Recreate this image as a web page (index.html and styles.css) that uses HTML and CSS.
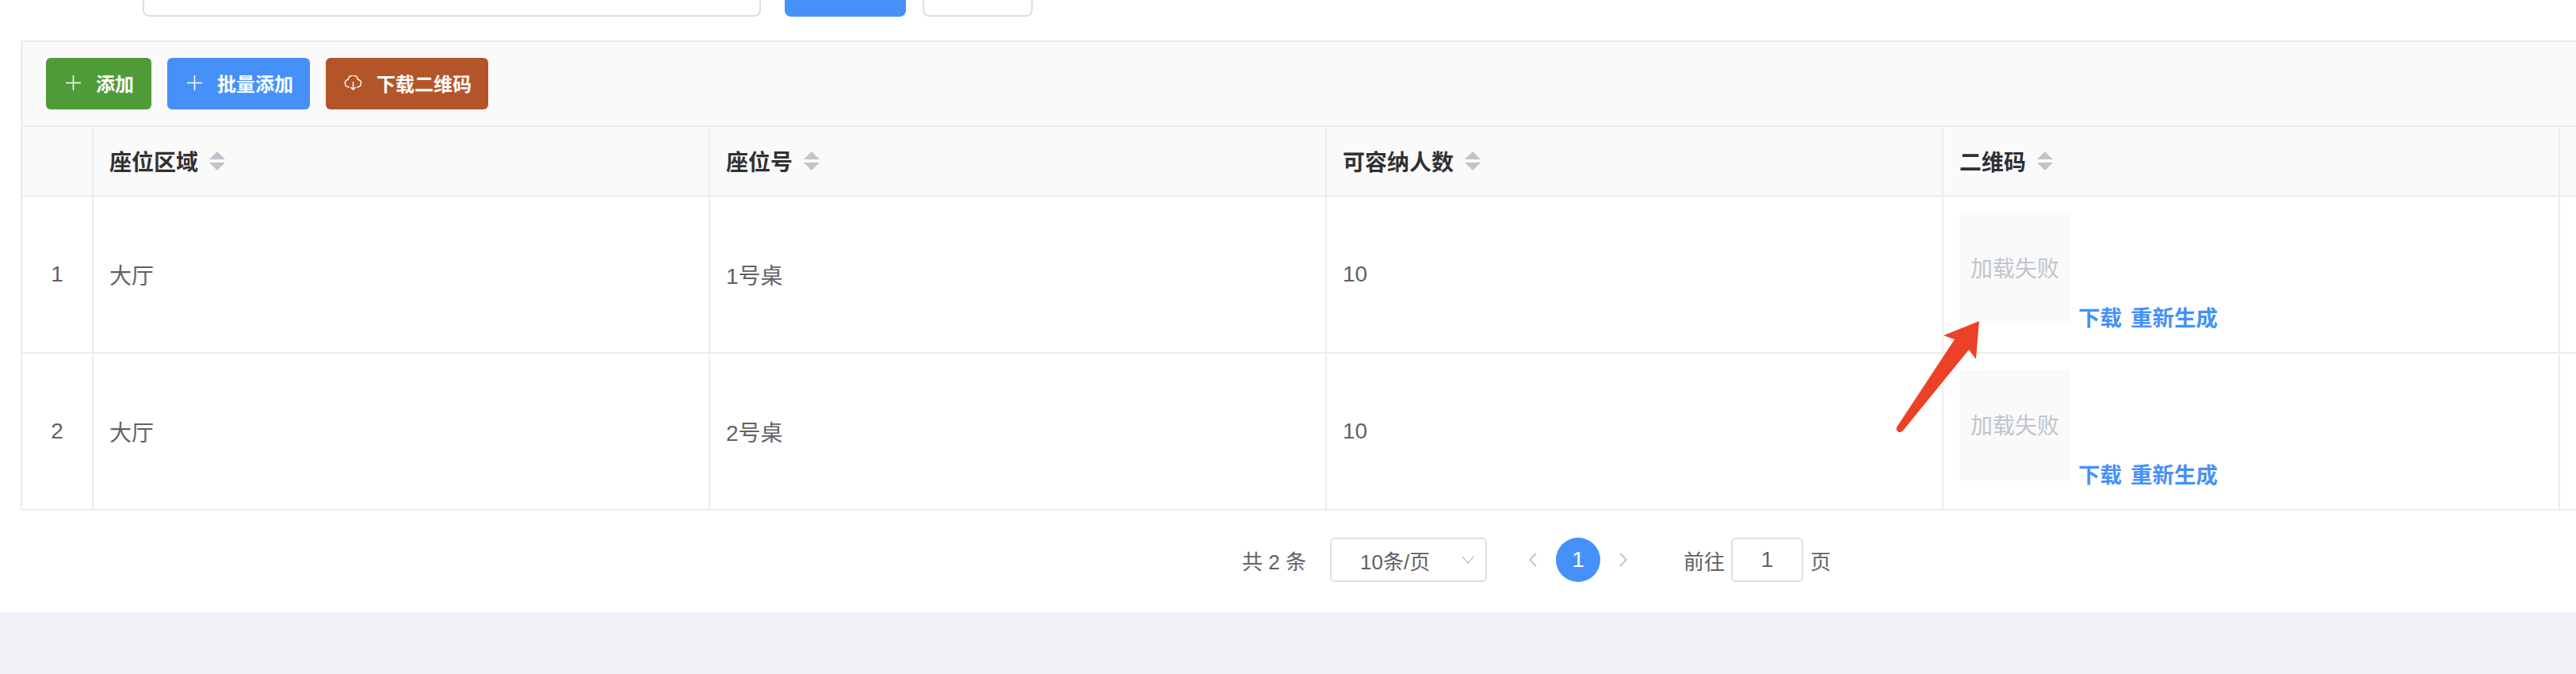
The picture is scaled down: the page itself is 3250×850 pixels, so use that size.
FILE: index.html
```html
<!DOCTYPE html>
<html lang="zh">
<head>
<meta charset="utf-8">
<title>座位管理</title>
<link rel="stylesheet" href="styles.css">
</head>
<body>
<div class="page">
  <main class="panel">
    <div class="search-row">
      <div class="search-input"></div>
      <div class="search-btn primary"></div>
      <div class="search-btn plain"></div>
    </div>
    <section class="table-wrap">
      <div class="toolbar">
        <button class="btn green"><svg class="ico" viewBox="0 0 20 20"><path d="M10 0v20M0 10h20"/></svg><span>添加</span></button>
        <button class="btn blue"><svg class="ico" viewBox="0 0 20 20"><path d="M10 0v20M0 10h20"/></svg><span>批量添加</span></button>
        <button class="btn brown"><svg class="ico cloud" viewBox="0 0 24 20"><path d="M7 15.5H6a5 5 0 0 1-.6-9.9A6.6 6.6 0 0 1 18.4 5.6a5 5 0 0 1-.4 9.9H17M12 8.5V19M8.8 15.8 12 19l3.2-3.2"/></svg><span>下载二维码</span></button>
      </div>
      <table class="grid">
        <colgroup><col class="c-idx"><col class="c-data"><col class="c-data"><col class="c-data"><col class="c-data"><col class="c-rest"></colgroup>
        <thead>
          <tr>
            <th></th>
            <th><span class="th-in">座位区域<i class="sort"></i></span></th>
            <th><span class="th-in">座位号<i class="sort"></i></span></th>
            <th><span class="th-in">可容纳人数<i class="sort"></i></span></th>
            <th><span class="th-in">二维码<i class="sort"></i></span></th>
            <th></th>
          </tr>
        </thead>
        <tbody>
          <tr>
            <td class="idx">1</td><td>大厅</td><td>1号桌</td><td>10</td>
            <td class="qr-td"><div class="qr-cell"><div class="qr">加载失败</div><a class="lnk">下载</a><a class="lnk">重新生成</a></div></td>
            <td></td>
          </tr>
          <tr>
            <td class="idx">2</td><td>大厅</td><td>2号桌</td><td>10</td>
            <td class="qr-td"><div class="qr-cell"><div class="qr">加载失败</div><a class="lnk">下载</a><a class="lnk">重新生成</a></div></td>
            <td></td>
          </tr>
        </tbody>
      </table>
    </section>
    <nav class="pager">
      <span class="total">共 2 条</span>
      <div class="size-select"><span>10条/页</span><svg class="caret" viewBox="0 0 16 10"><path d="M.7.7 8 9.2 15.3.7"/></svg></div>
      <svg class="arrow-ico first" viewBox="0 0 10 18"><path d="M9 .7 1.3 9 9 17.3"/></svg>
      <span class="cur">1</span>
      <svg class="arrow-ico" viewBox="0 0 10 18"><path d="M1 .7 8.7 9 1 17.3"/></svg>
      <span class="goto">前往</span>
      <div class="jump">1</div>
      <span class="unit">页</span>
    </nav>
    <svg class="annot" viewBox="0 0 130 160"><path d="M117 10 72 28 86 33 13.5 143Q11 147 15 149.5 18 151 21 148L104 46 113 58Z"/></svg>
  </main>
  <footer class="foot"></footer>
</div>
</body>
</html>
```
FILE: styles.css
```css
* { box-sizing: border-box; }
html, body { margin: 0; padding: 0; overflow: hidden; }
body { width: 3250px; height: 850px; font-family: "Liberation Sans", "Noto Sans CJK SC", sans-serif; color: #606266; }
.page { display: flex; flex-direction: column; height: 850px; }
.panel { position: relative; height: 772px; background: #fff; padding-left: 26px; overflow: hidden; }
.search-row { height: 21px; display: flex; align-items: flex-end; margin-bottom: 30px; }
.search-input, .search-btn { height: 60px; border-radius: 8px; flex: none; }
.search-input { width: 780px; margin-left: 154px; border: 2px solid #dcdfe6; }
.search-btn.primary { width: 153px; margin-left: 30px; background: #4691f9; }
.search-btn.plain { width: 139px; margin-left: 21px; border: 2px solid #dcdfe6; }
.table-wrap { width: 3300px; border: 2px solid #ebecee; border-width: 2px 0 0 2px; }
.toolbar { height: 107px; background: #fafafa; display: flex; align-items: center; gap: 20px; padding-left: 30px; border-bottom: 2px solid #ebecee; }
.btn { height: 65px; border: 0; border-radius: 6px; color: #fff; font: bold 24px "Liberation Sans", "Noto Sans CJK SC", sans-serif; display: flex; align-items: center; padding: 0 0 2px 25px; margin: 0; white-space: nowrap; }
.btn.green { background: #4f9b38; width: 133px; }
.btn.blue { background: #4691f9; width: 180px; }
.btn.brown { background: #b45529; width: 205px; padding-left: 23px; }
.ico { width: 19px; height: 19px; fill: none; stroke: #fff; stroke-width: 1.6; margin-right: 19px; flex: none; }
.ico.cloud { width: 23px; height: 19px; stroke-width: 1.5; margin-right: 18px; }
.grid { border-collapse: separate; border-spacing: 0; table-layout: fixed; width: 3300px; font-size: 28px; }
.c-idx { width: 90px; }
.c-data { width: 778px; }
th, td { padding: 0 20px; border-right: 2px solid #ebecee; border-bottom: 2px solid #ebecee; text-align: left; }
thead tr { height: 88px; }
tbody tr { height: 198px; }
th { background: #fafafa; color: #303133; font-weight: bold; }
.th-in { display: inline-flex; align-items: center; }
.sort { display: inline-block; position: relative; width: 20px; height: 24px; margin-left: 14px; }
.sort::before, .sort::after { content: ""; position: absolute; left: 0; border-left: 10px solid transparent; border-right: 10px solid transparent; }
.sort::before { top: 0; border-bottom: 10px solid #c0c4cc; }
.sort::after { bottom: 0; border-top: 10px solid #c0c4cc; }
td.idx { text-align: center; padding: 0; }
td.qr-td { vertical-align: top; padding-top: 20px; }
.qr-cell { display: flex; align-items: flex-end; }
.qr { width: 140px; height: 140px; background: #fafafa; color: #c0c4cc; display: flex; align-items: center; justify-content: center; font-size: 28px; padding-bottom: 2px; margin-right: 10px; white-space: nowrap; }
.lnk { color: #4691f9; font-weight: bold; font-size: 27.5px; margin-right: 11px; line-height: 26px; margin-bottom: -7px; }
.pager { height: 56px; margin-top: 34px; display: flex; align-items: center; font-size: 26px; }
.total { margin-left: 1541px; width: 111px; white-space: nowrap; }
.size-select { width: 198px; height: 56px; border: 2px solid #dcdfe6; border-radius: 6px; display: flex; align-items: center; justify-content: space-between; padding: 0 14px 0 36px; }
.caret { width: 16px; height: 10px; fill: none; stroke: #c0c4cc; stroke-width: 1.4; }
.arrow-ico { width: 10px; height: 18px; fill: none; stroke: #c0c4cc; stroke-width: 2; margin-left: 24px; flex: none; }
.arrow-ico.first { margin-left: 53px; margin-right: 24px; }
.cur { width: 56px; height: 56px; border-radius: 50%; background: #4691f9; color: #fff; font-size: 28px; display: flex; align-items: center; justify-content: center; flex: none; }
.goto { margin-left: 71px; margin-right: 8px; }
.jump { width: 91px; height: 56px; border: 2px solid #dcdfe6; border-radius: 6px; font-size: 28px; display: flex; align-items: center; justify-content: center; }
.unit { margin-left: 9px; }
.annot { position: absolute; left: 2380px; top: 395px; width: 130px; height: 160px; fill: #ec4126; }
.foot { flex: 1; background: #eff1f6; }
```
